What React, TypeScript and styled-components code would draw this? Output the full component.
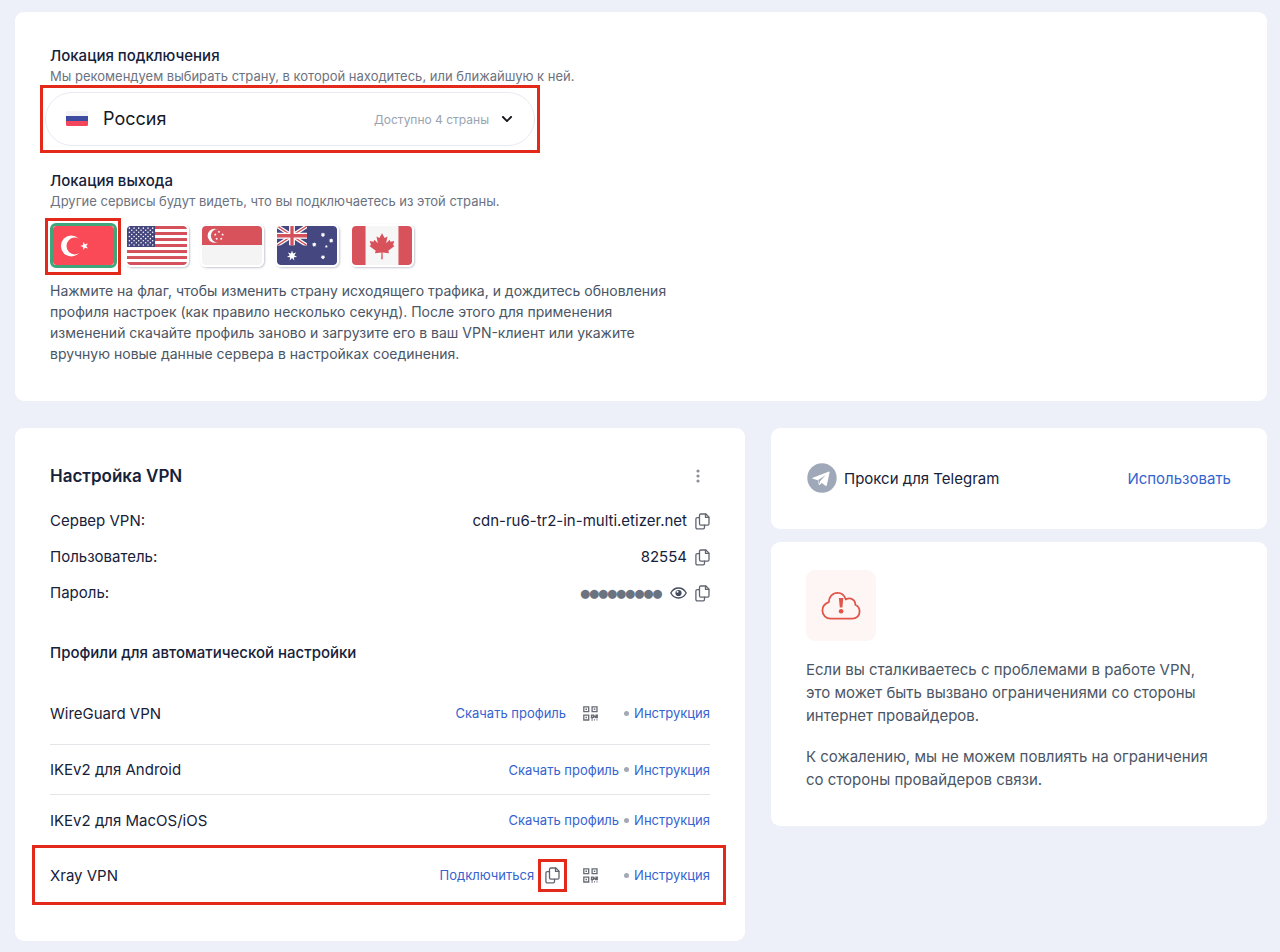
import React, { useState } from "react";
import styled, { createGlobalStyle, css } from "styled-components";
import { FaChevronDown } from "react-icons/fa";

const ink = "#16213a";
const body = "#4b5565";
const muted = "#6b7280";
const blue = "#3563cf";
const red = "#e2291a";

const GlobalStyle = createGlobalStyle`
  * { box-sizing: border-box; }
  body {
    margin: 0;
    background: #edf0f9;
    color: ${ink};
    font-family: Inter, "Liberation Sans", sans-serif;
    font-size: 15px;
  }
  h2, h3, p, ul, dl, dd, dt { margin: 0; padding: 0; font-weight: 400; }
  button, select { font: inherit; color: inherit; background: none; border: 0; padding: 0; cursor: pointer; }
`;

const Page = styled.main`
  padding: 12px 13px 11px 15px;
  display: grid;
  gap: 27px;
`;

const Card = styled.section<{ $pad: string }>`
  background: #fff;
  border-radius: 9px;
  padding: ${(p) => p.$pad};
`;

const Columns = styled.div`
  display: grid;
  grid-template-columns: 730fr 496fr;
  gap: 26px;
  align-items: start;
`;

const Side = styled.div`
  display: grid;
  gap: 13px;
`;

/* Red marker drawn round an element without taking room in the layout. */
const marker = css<{ $inset: string }>`
  position: relative;
  &::after {
    content: "";
    position: absolute;
    inset: ${(p) => p.$inset};
    border: 3px solid ${red};
    pointer-events: none;
  }
`;

const Marked = styled.div`
  ${marker}
`;

const FieldTitle = styled.h3`
  font-size: 15px;
  line-height: 20px;
  font-weight: 500;
`;

const FieldHint = styled.p`
  font-size: 13px;
  line-height: 20px;
  color: ${muted};
`;

const SelectSlot = styled(Marked)`
  max-width: 490px;
  margin: 6px 0 25px -5px;
`;

const SelectBox = styled.label`
  display: flex;
  align-items: center;
  height: 54px;
  padding: 0 21px 0 20px;
  border: 1px solid #e9e9f3;
  border-radius: 27px;
  color: #16181d;
`;

const CountrySelect = styled.select`
  flex: 1;
  appearance: none;
  margin-left: 15px;
  font-size: 18px;
  line-height: 24px;
  outline: none;
`;

const SelectNote = styled.span`
  margin-right: 12px;
  font-size: 12px;
  color: #9aa3b0;
`;

const Flags = styled.div`
  display: grid;
  grid-template-columns: repeat(5, 65px);
  gap: 10px;
  height: 44px;
  margin: 12px 0 13px;
`;

const FlagButton = styled.button<{ $active: boolean }>`
  display: block;
  width: ${(p) => (p.$active ? 67 : 64)}px;
  height: ${(p) => (p.$active ? 45 : 43)}px;
  margin-top: ${(p) => (p.$active ? 0 : 1)}px;
  overflow: hidden;
  border-radius: 6px;
  border: ${(p) => (p.$active ? "3px solid #3fa67c" : "2px solid #fff")};
  box-shadow: ${(p) => (p.$active ? "none" : "1px 1px 2px rgba(30, 40, 70, 0.25)")};
  > svg { display: block; width: 100%; height: 100%; border-radius: 3px; }
`;

const Explain = styled.p`
  max-width: 640px;
  font-size: 14px;
  line-height: 21px;
  padding-bottom: 1px;
  color: ${body};
`;

const CardHead = styled.div`
  display: flex;
  align-items: center;
  justify-content: space-between;
  height: 24px;
  margin-bottom: 15px;
`;

const CardTitle = styled.h2`
  font-size: 17px;
  line-height: 24px;
  font-weight: 600;
`;

const MenuButton = styled.button`
  display: flex;
  justify-content: center;
  width: 24px;
`;

const Credentials = styled.dl`
  line-height: 36px;
  font-size: 15px;
`;

const CredentialRow = styled.div`
  display: flex;
  justify-content: space-between;
`;

const Value = styled.dd`
  display: flex;
  align-items: center;
  gap: 8px;
  height: 36px;
`;

const Dots = styled.span`
  font-family: "DejaVu Sans Mono", monospace;
  font-size: 15px;
  color: ${muted};
`;

const IconButton = styled.button`
  display: flex;
  svg { display: block; }
`;

const ProfilesTitle = styled.h3`
  margin: 30px 0 17px;
  font-size: 15px;
  line-height: 24px;
  font-weight: 500;
`;

const ProfileList = styled.ul`
  list-style: none;
`;

const ProfileRow = styled.li<{ $height: number; $line?: boolean }>`
  display: flex;
  align-items: center;
  justify-content: space-between;
  height: ${(p) => p.$height}px;
  border-bottom: ${(p) => (p.$line ? "1px solid #e4e6ea" : "0")};
  font-size: 15px;
`;

const MarkedProfileRow = styled(ProfileRow)`
  ${marker}
`;

const Actions = styled.div`
  display: flex;
  align-items: center;
  font-size: 13px;
`;

const Link = styled.a`
  color: ${blue};
  text-decoration: none;
`;

const Separator = styled.span`
  width: 5px;
  height: 5px;
  margin: 0 5px;
  border-radius: 50%;
  background: #a3a8b2;
`;

const QrButton = styled(IconButton)`
  margin: 0 21px 0 17px;
`;

const CopySlot = styled(Marked)`
  margin-left: 11px;
  & + ${QrButton} { margin-left: 23px; }
`;

const ProxyRow = styled.div`
  display: flex;
  align-items: center;
  gap: 7px;
  height: 30px;
  font-size: 15px;
  ${Link} { margin-left: auto; }
`;

const AlertTile = styled.div`
  display: grid;
  place-items: center;
  width: 70px;
  height: 71px;
  margin-bottom: 17px;
  border-radius: 9px;
  background: #fef6f4;
`;

const Notice = styled.p`
  max-width: 414px;
  font-size: 15px;
  line-height: 23px;
  color: ${body};
  & + & { margin-top: 18px; }
`;

const CopyIcon = () => (
  <svg width="15" height="17" viewBox="0 0 15 17" fill="none" stroke="#60656f" strokeWidth="1.3" strokeLinejoin="round" strokeLinecap="round">
    <path d="M5.900 1h5L14 4.100v6.600a1.400 1.400 0 0 1-1.400 1.400H5.900a1.400 1.400 0 0 1-1.400-1.400V2.400A1.400 1.400 0 0 1 5.900 1z" />
    <path d="M10.500 1.200v3.200h3.300" />
    <path d="M4.400 4.600H2.200A1.300 1.300 0 0 0 .9 5.900v8.700a1.300 1.300 0 0 0 1.300 1.300h6a1.300 1.300 0 0 0 1.300-1.300v-2.400" />
  </svg>
);

const EyeIcon = () => (
  <svg width="17" height="12" viewBox="0 0 17 12" fill="none">
    <path d="M.8 6C2.600 2.700 5.300 1 8.500 1s5.900 1.700 7.700 5c-1.800 3.300-4.500 5-7.700 5S2.600 9.300.8 6z" stroke="#434b5c" strokeWidth="1.300" />
    <circle cx="8.500" cy="6" r="3.100" fill="#434b5c" />
    <circle cx="7.500" cy="4.800" r="1" fill="#fff" />
  </svg>
);

const QrIcon = () => (
  <svg width="15" height="15" viewBox="0 0 15 15" fill="none" stroke="#666b74" strokeWidth="1.300">
    <path d="M.8.8h4.900v4.900H.8zM9.100.8H14v4.900H9.100zM.8 9.100h4.900V14H.8z" />
    <path d="M2.500 3.250h1.500M10.800 3.250h1.500M2.500 11.550h1.500" strokeWidth="1.500" />
    <path d="M8.500 9.100h2v2.200h-2zM10.500 9.300l2.300 2.400M13 8.500v3.700M14.300 8.500v3.700M9.100 11.500v1.500M8.500 14h1.200M11 13.900h1M13.500 13.900h1" />
  </svg>
);

const DotsIcon = () => (
  <svg width="4" height="14" viewBox="0 0 4 14" fill="#8a909b">
    <circle cx="2" cy="2" r="1.600" />
    <circle cx="2" cy="7" r="1.600" />
    <circle cx="2" cy="12" r="1.600" />
  </svg>
);

const TelegramIcon = () => (
  <svg width="30" height="30" viewBox="0 0 30 30">
    <circle cx="15" cy="15" r="14.700" fill="#9fa8b9" />
    <path d="M5.800 14.700 21.400 8.700c.8-.3 1.300.1 1.100 1l-2.600 12.300c-.2.900-.8 1.100-1.500.7l-3.600-2.800-2 1.900c-.4.400-.9.300-1-.3l-.9-4.200-5-1.500c-.7-.2-.7-.8-.1-1.100z" fill="#fff" />
    <path d="M11.200 17.100 18.800 12l-5.600 6-.7 3z" fill="#9fa8b9" />
  </svg>
);

const CloudAlertIcon = () => (
  <svg width="40" height="30" viewBox="0 0 40 30" fill="none" stroke="#e0564b" strokeWidth="1.800" strokeLinecap="round" strokeLinejoin="round">
    <path d="M9.500 27.700h22c4 0 7.100-3.200 7.100-7.200 0-3.200-1.700-5.500-4.300-6.700.4-4.900-5-8.200-9.500-5.400C23.400 4.300 20.400 1.800 16.700 1.800c-5.300 0-9 4.200-8.900 9.400C4 12.600 1.400 15.700 1.400 19.600c0 4.600 3.700 8.100 8.100 8.100z" />
    <path d="M17.900 7h4.400l-.9 9.500h-2.600z" fill="#e0564b" stroke="none" />
    <circle cx="20.100" cy="20.300" r="2.300" fill="#e0564b" stroke="none" />
  </svg>
);

const RussiaFlag = () => (
  <svg width="22" height="17" viewBox="0 0 22 17">
    <path fill="#f4f4f6" d="M1.500 0h19A1.500 1.500 0 0 1 22 1.500V5H0V1.500A1.500 1.500 0 0 1 1.500 0z" />
    <path fill="#3d4ba0" d="M0 5h22v5H0z" />
    <path fill="#f3455b" d="M0 10h22v3.500a1.500 1.500 0 0 1-1.500 1.500h-19A1.500 1.500 0 0 1 0 13.500z" />
  </svg>
);

const star = (cx: number, cy: number, r: number, points: number, inner: number, turn = -90) =>
  Array.from({ length: points * 2 }, (_, i) => {
    const a = ((turn + (i * 180) / points) * Math.PI) / 180;
    const d = i % 2 ? r * inner : r;
    return `${(cx + d * Math.cos(a)).toFixed(2)},${(cy + d * Math.sin(a)).toFixed(2)}`;
  }).join(" ");

const Turkey = () => (
  <svg viewBox="0 0 60 38" preserveAspectRatio="none">
    <path fill="#fb4a57" d="M0 0h60v38H0z" />
    <circle cx="18" cy="19.500" r="10.200" fill="#fff" />
    <circle cx="21.500" cy="19.500" r="8.200" fill="#fb4a57" />
    <polygon fill="#fff" points={star(31, 19.5, 4.2, 5, 0.4, 180)} />
  </svg>
);

const Usa = () => (
  <svg viewBox="0 0 62 40" preserveAspectRatio="none">
    <path fill="#fff" d="M0 0h62v40H0z" />
    {Array.from({ length: 7 }, (_, i) => (
      <rect key={i} y={i * 6.16} width="62" height="3.080" fill="#d4515c" />
    ))}
    <path fill="#46467f" d="M0 0h29v21.500H0z" />
    {Array.from({ length: 9 }, (_, r) =>
      Array.from({ length: r % 2 ? 5 : 6 }, (_, c) => (
        <circle key={`${r}-${c}`} cx={2.5 + c * 4.8 + (r % 2 ? 2.4 : 0)} cy={2.2 + r * 2.15} r="0.800" fill="#fff" />
      ))
    )}
  </svg>
);

const Singapore = () => (
  <svg viewBox="0 0 62 40" preserveAspectRatio="none">
    <path fill="#f4f4f4" d="M0 0h62v40H0z" />
    <path fill="#d8525c" d="M0 0h62v19.500H0z" />
    <circle cx="13" cy="10" r="7.200" fill="#fff" />
    <circle cx="16" cy="10" r="6.800" fill="#d8525c" />
    {[0, 1, 2, 3, 4].map((i) => {
      const a = ((-90 + i * 72) * Math.PI) / 180;
      return <polygon key={i} fill="#fff" points={star(17.5 + 4 * Math.cos(a), 10 + 4 * Math.sin(a), 1.5, 5, 0.45)} />;
    })}
  </svg>
);

const Australia = () => (
  <svg viewBox="0 0 62 40" preserveAspectRatio="none">
    <path fill="#454780" d="M0 0h62v40H0z" />
    <svg width="31" height="20" viewBox="0 0 31 20">
      <path d="M0 0l31 20M31 0L0 20" stroke="#fff" strokeWidth="4" />
      <path d="M0 0l31 20M31 0L0 20" stroke="#d4515c" strokeWidth="1.500" />
      <path d="M15.500 0v20M0 10h31" stroke="#fff" strokeWidth="6" />
      <path d="M15.500 0v20M0 10h31" stroke="#d4515c" strokeWidth="3.400" />
    </svg>
    <polygon fill="#fff" points={star(15.5, 30.5, 5.4, 7, 0.45)} />
    <polygon fill="#fff" points={star(47.5, 9, 2.4, 7, 0.6)} />
    <polygon fill="#fff" points={star(38.5, 19, 2.4, 7, 0.6)} />
    <polygon fill="#fff" points={star(56, 15, 2.4, 7, 0.6)} />
    <polygon fill="#fff" points={star(47.5, 32, 2.4, 7, 0.6)} />
    <polygon fill="#fff" points={star(51, 21, 1.5, 5, 0.6)} />
  </svg>
);

const Canada = () => (
  <svg viewBox="0 0 62 40" preserveAspectRatio="none">
    <path fill="#f6f6f6" d="M0 0h62v40H0z" />
    <path fill="#d8525c" d="M0 0h14v40H0zM48 0h14v40H48z" />
    <path
      fill="#d8525c"
      d="M31 7.500l-2.700 4.800-3-1.500 1.400 7-3.600-3.600-.8 2-4-.8 1.300 4-1.600 1 6.500 5.100-.8 2.500 6.700-.9-.2 6.900h1.600l-.2-6.900 6.700.9-.8-2.500 6.500-5.100-1.600-1 1.300-4-4 .8-.8-2-3.600 3.600 1.400-7-3 1.500z"
    />
  </svg>
);

const exits = [
  { name: "Турция", Flag: Turkey },
  { name: "США", Flag: Usa },
  { name: "Сингапур", Flag: Singapore },
  { name: "Австралия", Flag: Australia },
  { name: "Канада", Flag: Canada },
];

export default function App() {
  const [exit, setExit] = useState("Турция");

  const flag = ({ name, Flag }: (typeof exits)[number]) => (
    <FlagButton
      key={name}
      type="button"
      aria-label={name}
      aria-pressed={exit === name}
      $active={exit === name}
      onClick={() => setExit(name)}
    >
      <Flag />
    </FlagButton>
  );

  return (
    <>
      <GlobalStyle />
      <Page>
        <Card $pad="34px 35px 36px">
          <FieldTitle>Локация подключения</FieldTitle>
          <FieldHint>Мы рекомендуем выбирать страну, в которой находитесь, или ближайшую к ней.</FieldHint>
          <SelectSlot $inset="-7px -5px">
            <SelectBox>
              <RussiaFlag />
              <CountrySelect aria-label="Локация подключения" defaultValue="Россия">
                <option>Россия</option>
              </CountrySelect>
              <SelectNote>Доступно 4 страны</SelectNote>
              <FaChevronDown size={12} />
            </SelectBox>
          </SelectSlot>
          <FieldTitle>Локация выхода</FieldTitle>
          <FieldHint>Другие сервисы будут видеть, что вы подключаетесь из этой страны.</FieldHint>
          <Flags>
            <Marked $inset="-5px -6px -7px -5px">{flag(exits[0])}</Marked>
            {exits.slice(1).map(flag)}
          </Flags>
          <Explain>
            Нажмите на флаг, чтобы изменить страну исходящего трафика, и дождитесь обновления профиля настроек (как
            правило несколько секунд). После этого для применения изменений скачайте профиль заново и загрузите его в
            ваш VPN-клиент или укажите вручную новые данные сервера в настройках соединения.
          </Explain>
        </Card>

        <Columns>
          <Card $pad="36px 35px">
            <CardHead>
              <CardTitle>Настройка VPN</CardTitle>
              <MenuButton type="button" aria-label="Меню">
                <DotsIcon />
              </MenuButton>
            </CardHead>
            <Credentials>
              <CredentialRow>
                <dt>Сервер VPN:</dt>
                <Value>
                  cdn-ru6-tr2-in-multi.etizer.net
                  <IconButton type="button" aria-label="Скопировать сервер"><CopyIcon /></IconButton>
                </Value>
              </CredentialRow>
              <CredentialRow>
                <dt>Пользователь:</dt>
                <Value>
                  82554
                  <IconButton type="button" aria-label="Скопировать пользователя"><CopyIcon /></IconButton>
                </Value>
              </CredentialRow>
              <CredentialRow>
                <dt>Пароль:</dt>
                <Value>
                  <Dots>●●●●●●●●●</Dots>
                  <IconButton type="button" aria-label="Показать пароль"><EyeIcon /></IconButton>
                  <IconButton type="button" aria-label="Скопировать пароль"><CopyIcon /></IconButton>
                </Value>
              </CredentialRow>
            </Credentials>
            <ProfilesTitle>Профили для автоматической настройки</ProfilesTitle>
            <ProfileList>
              <ProfileRow $height={63} $line>
                WireGuard VPN
                <Actions>
                  <Link href="#wireguard">Скачать профиль</Link>
                  <QrButton type="button" aria-label="QR-код WireGuard"><QrIcon /></QrButton>
                  <Separator />
                  <Link href="#wireguard-help">Инструкция</Link>
                </Actions>
              </ProfileRow>
              <ProfileRow $height={50} $line>
                IKEv2 для Android
                <Actions>
                  <Link href="#android">Скачать профиль</Link>
                  <Separator />
                  <Link href="#android-help">Инструкция</Link>
                </Actions>
              </ProfileRow>
              <ProfileRow $height={50}>
                IKEv2 для MacOS/iOS
                <Actions>
                  <Link href="#apple">Скачать профиль</Link>
                  <Separator />
                  <Link href="#apple-help">Инструкция</Link>
                </Actions>
              </ProfileRow>
              <MarkedProfileRow $height={60} $inset="0 -16px 0 -18px">
                Xray VPN
                <Actions>
                  <Link href="#xray">Подключиться</Link>
                  <CopySlot $inset="-8px -7px">
                    <IconButton type="button" aria-label="Скопировать ссылку"><CopyIcon /></IconButton>
                  </CopySlot>
                  <QrButton type="button" aria-label="QR-код Xray"><QrIcon /></QrButton>
                  <Separator />
                  <Link href="#xray-help">Инструкция</Link>
                </Actions>
              </MarkedProfileRow>
            </ProfileList>
          </Card>

          <Side>
            <Card $pad="35px 36px 36px">
              <ProxyRow>
                <TelegramIcon />
                Прокси для Telegram
                <Link href="#telegram">Использовать</Link>
              </ProxyRow>
            </Card>
            <Card $pad="28px 35px 35px">
              <AlertTile>
                <CloudAlertIcon />
              </AlertTile>
              <Notice>
                Если вы сталкиваетесь с проблемами в работе VPN, это может быть вызвано ограничениями со стороны
                интернет провайдеров.
              </Notice>
              <Notice>К сожалению, мы не можем повлиять на ограничения со стороны провайдеров связи.</Notice>
            </Card>
          </Side>
        </Columns>
      </Page>
    </>
  );
}
